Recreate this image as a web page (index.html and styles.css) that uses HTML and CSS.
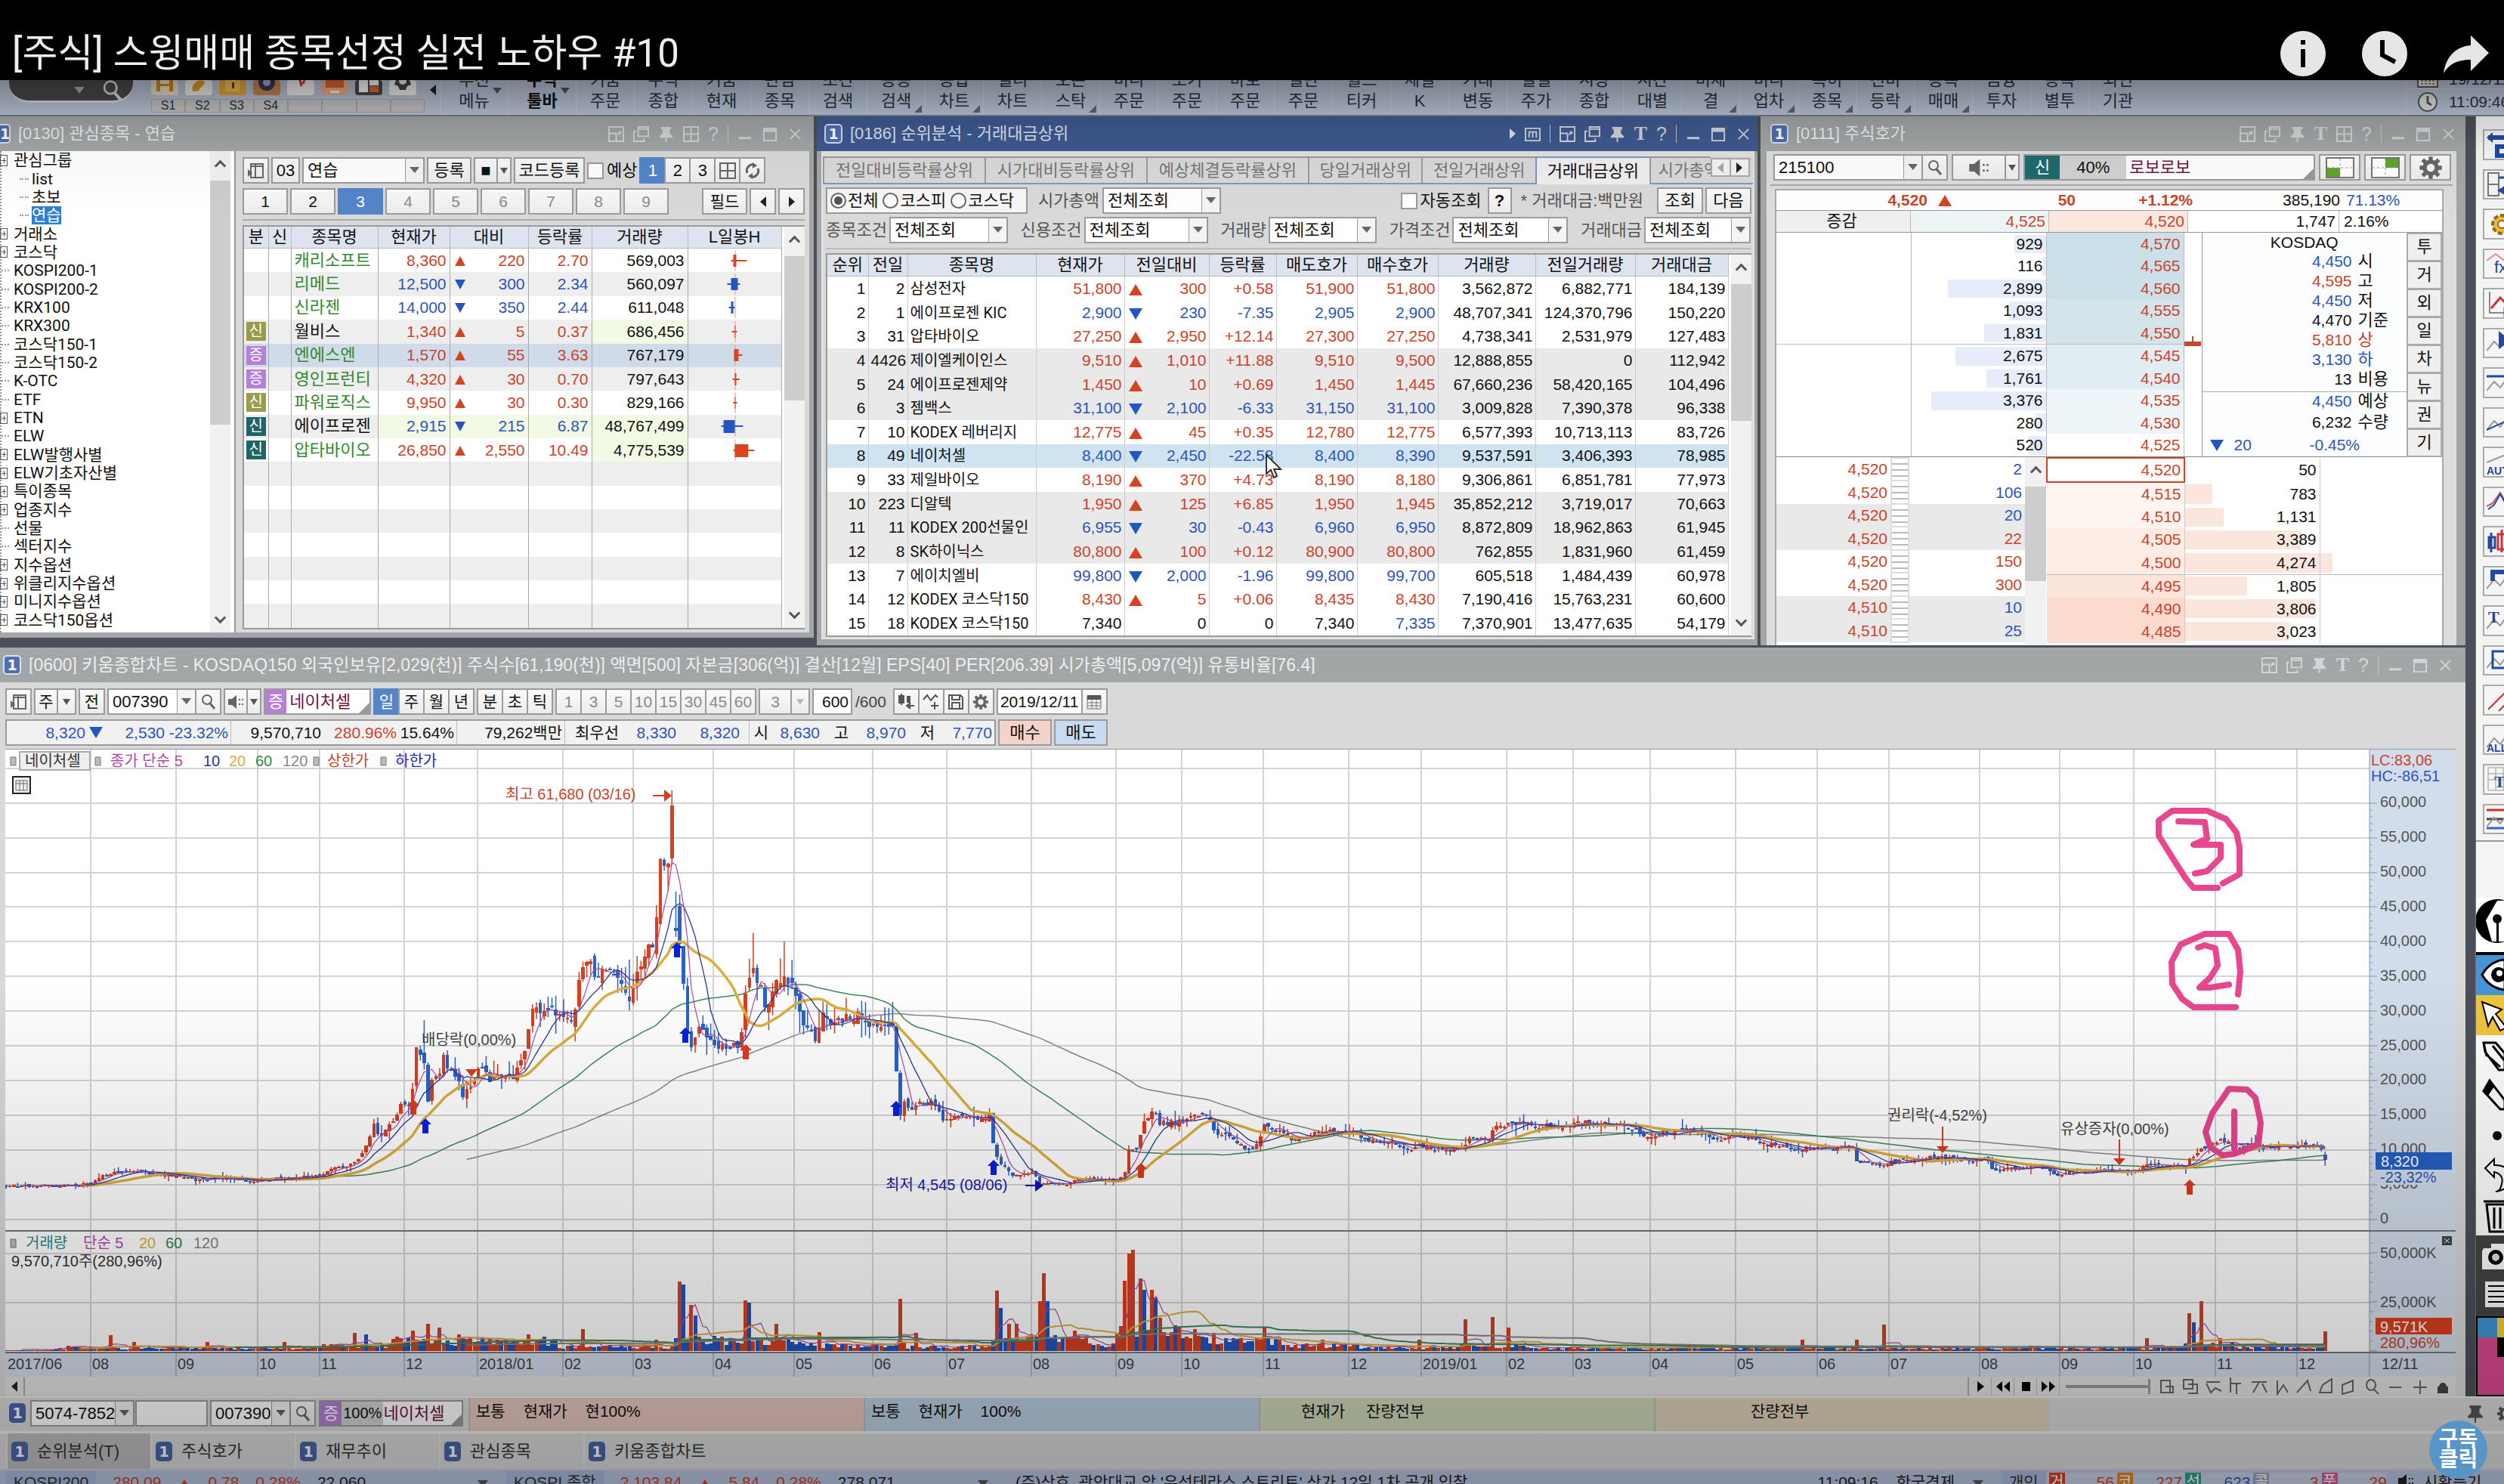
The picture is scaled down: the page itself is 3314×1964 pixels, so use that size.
FILE: index.html
```html
<!DOCTYPE html>
<html lang="ko">
<head>
<meta charset="utf-8">
<title>[주식] 스윙매매 종목선정 실전 노하우 #10</title>
<link rel="stylesheet" href="styles.css">
</head>
<body>
<svg class="defs" aria-hidden="true">
  <symbol id="win" viewBox="0 0 22 22"><path d="M1 1h20v20H1zM1 10h10v11M14 8h3v3M17 8l-4 4" fill="none" stroke="currentColor" stroke-width="2"/></symbol>
  <symbol id="copy" viewBox="0 0 22 22"><path d="M7 1h14v13H7zM7 4h14M4 7H1v14h14v-4" fill="none" stroke="currentColor" stroke-width="2"/></symbol>
  <symbol id="pin" viewBox="0 0 22 22"><path d="M4 1h14v3l-2 1v5l4 4v2H2v-2l4-4V5L4 4zM10 16h2v6h-2z" fill="currentColor"/></symbol>
  <symbol id="grid" viewBox="0 0 22 22"><path d="M1 1h20v20H1zM11 1v20M1 11h20" fill="none" stroke="currentColor" stroke-width="2"/></symbol>
  <symbol id="memo" viewBox="0 0 22 22"><path d="M1 3h20v17H1zM6 16V8h10v8M11 8v8" fill="none" stroke="currentColor" stroke-width="2"/></symbol>
  <symbol id="min" viewBox="0 0 22 22"><path d="M2 15h17v3H2z" fill="currentColor"/></symbol>
  <symbol id="max" viewBox="0 0 22 22"><path d="M2 3h17v17H2z" fill="none" stroke="currentColor" stroke-width="2"/><path d="M2 3h17v5H2z" fill="currentColor"/></symbol>
  <symbol id="close" viewBox="0 0 22 22"><path d="M4 4l14 14M18 4L4 18" stroke="currentColor" stroke-width="2"/></symbol>
  <symbol id="search" viewBox="0 0 22 22"><circle cx="9" cy="8" r="6" fill="none" stroke="currentColor" stroke-width="2"/><path d="M13 13l6 7" stroke="currentColor" stroke-width="3"/></symbol>
  <symbol id="speaker" viewBox="0 0 22 22"><path d="M1 7h5l6-5v18l-6-5H1z" fill="currentColor"/><path d="M15 7h2v2h-2zM19 7h2v2h-2zM15 13h2v2h-2zM19 13h2v2h-2z" fill="currentColor"/></symbol>
  <symbol id="gear" viewBox="0 0 24 24"><circle cx="12" cy="12" r="6" fill="none" stroke="currentColor" stroke-width="4"/><path d="M12 1v4M12 19v4M1 12h4M19 12h4M4 4l3 3M17 17l3 3M20 4l-3 3M7 17l-3 3" stroke="currentColor" stroke-width="4"/></symbol>
  <symbol id="panel" viewBox="0 0 22 22"><path d="M4 2h16v18H4zM4 5h16M10 2v18" fill="none" stroke="currentColor" stroke-width="2"/><path d="M0 9l6 5-6 5z" fill="currentColor"/></symbol>
  <symbol id="refresh" viewBox="0 0 22 22"><path d="M4 14a8 8 0 0 1 9-11M18 8a8 8 0 0 1-9 11" fill="none" stroke="currentColor" stroke-width="3"/><path d="M11 0l6 4-6 4zM11 22l-6-4 6-4z" fill="currentColor"/></symbol>
</svg>

<div class="app">
  <header class="video">
    <h1>[주식] 스윙매매 종목선정 실전 노하우 #10</h1>
    <div class="video-actions">
      <button aria-label="정보"><svg width="60" height="60" viewBox="0 0 60 60"><circle cx="30" cy="30" r="30" fill="#e6e6e6"/><path d="M27 12h6v6h-6zM27 24h6v24h-6z"/></svg></button>
      <button aria-label="나중에 볼 동영상"><svg width="60" height="60" viewBox="0 0 60 60"><circle cx="30" cy="30" r="30" fill="#e6e6e6"/><path d="M27 12v20l17 9" fill="none" stroke="#000" stroke-width="6"/></svg></button>
      <button aria-label="공유"><svg width="60" height="60" viewBox="0 0 60 60"><path d="M36 6l24 23-24 24V38C18 38 7 44 0 56 3 36 14 21 36 19z" fill="#e6e6e6"/></svg></button>
    </div>
  </header>

  <nav class="ribbon">
    <div class="pill"><i class="dn"></i><svg width="34" height="30"><use href="#search"/></svg></div>
    <div class="quick">
      <div class="quick-icons">
        <svg viewBox="0 0 36 20"><rect width="36" height="20" rx="4" fill="#e8e0d0"/><path d="M7 0h22v15H7z" fill="#d08a1c"/><path d="M12 0h12v5H12zM12 8h12v7H12z" fill="#f7e7c0"/></svg>
        <svg viewBox="0 0 36 20"><rect width="36" height="20" rx="4" fill="#f2f0ea"/><path d="M10 15C8 6 14 2 20 0l6 2c0 6-6 6-8 12z" fill="#e59a20"/></svg>
        <svg viewBox="0 0 36 20"><rect width="36" height="20" rx="4" fill="#e6a93c"/><rect x="8" width="20" height="15" rx="2" fill="#f6c552"/><path d="M17 3h3v8h-3z" fill="#5b4310"/></svg>
        <svg viewBox="0 0 36 20"><rect width="36" height="20" rx="4" fill="#c8894e"/><circle cx="18" cy="3" r="11" fill="#3b3560"/><circle cx="18" cy="3" r="5" fill="#a9a6d6"/></svg>
        <svg viewBox="0 0 36 20"><rect width="36" height="20" rx="4" fill="#f4f4f4"/><path d="M17 0l2 8M23 0l-2 5" stroke="#c33" stroke-width="3"/></svg>
        <svg viewBox="0 0 36 20"><rect width="36" height="20" rx="4" fill="#efb48c"/><path d="M6 0h24v10H6z" fill="#e8652a"/><path d="M12 14h12v3H12z" fill="#fff"/></svg>
        <svg viewBox="0 0 36 20"><rect width="36" height="20" rx="4" fill="#4a4a4a"/><path d="M5 0h12v16H5z" fill="#fff"/><path d="M19 0h12v7H19z" fill="#fff"/><path d="M19 8h12v8H19z" fill="#e8652a"/></svg>
        <svg viewBox="0 0 36 20"><rect width="36" height="20" rx="4" fill="#f4f4f4"/><path d="M9 0h18l2 6-5 2-2 5h-8l-2-5-5-2z" fill="#444"/><circle cx="18" cy="1" r="5" fill="#f4f4f4"/></svg>
      </div>
      <div class="quick-slots"><b>S1</b><b>S2</b><b>S3</b><b>S4</b><b></b><b></b><b></b><b></b></div>
    </div>
    <i class="lf fold"></i>
    <div class="menus" id="menus"></div>
    <div class="clock">
      <div><svg width="28" height="16" viewBox="0 0 28 16"><path d="M1 0h26v14H1z" fill="#e8e4d8" stroke="#555" stroke-width="2"/><path d="M5 6h18M5 10h18" stroke="#888" stroke-width="2" stroke-dasharray="3 2"/></svg><span>19/12/11</span></div>
      <div><svg width="28" height="28" viewBox="0 0 28 28"><circle cx="14" cy="14" r="12" fill="#e4e4e0" stroke="#555" stroke-width="2"/><path d="M14 6v9l5 3" fill="none" stroke="#555" stroke-width="3"/></svg><span>11:09:46</span></div>
    </div>
  </nav>

  <div class="desk">
    <main class="work">
      <div class="top">
        <section class="window w1">
          <div class="title"><em>1</em><h2>[0130] 관심종목 - 연습</h2>
            <div class="tools"><button><svg><use href="#win"/></svg></button><button><svg><use href="#copy"/></svg></button><button><svg><use href="#pin"/></svg></button><button><svg><use href="#grid"/></svg></button><button>?</button><i></i><button><svg><use href="#min"/></svg></button><button><svg><use href="#max"/></svg></button><button><svg><use href="#close"/></svg></button></div></div>
          <div class="fav">
            <ul class="tree" id="tree"></ul>
            <div class="bar"><i class="chev up"></i><b></b><i class="chev"></i></div>
            <div class="fav-main">
              <div class="row r1">
                <button class="w34"><svg><use href="#panel"/></svg></button><button class="w38">03</button>
                <select aria-label="관심그룹" class="w162"><option>연습</option></select>
                <button class="w59">등록</button>
                <span class="join"><button class="w30">■</button><button class="w18"><i class="dn sm"></i></button></span>
                <button class="w93">코드등록</button>
                <label><input type="checkbox">예상</label>
                <span class="join"><button class="w33 on">1</button><button class="w33">2</button><button class="w33">3</button><button class="w34"><svg><use href="#grid"/></svg></button><button class="w34"><svg><use href="#refresh"/></svg></button></span>
              </div>
              <div class="row r2"><button>1</button><button>2</button><button class="on">3</button><button class="off">4</button><button class="off">5</button><button class="off">6</button><button class="off">7</button><button class="off">8</button><button class="off">9</button><span class="grow"></span><button>필드</button><button class="w34"><i class="lf"></i></button><button class="w34"><i class="rt"></i></button></div>
              <div class="sheet"><table id="fav"></table><div class="bar"><i class="chev up"></i><b></b><i class="chev"></i></div></div>
            </div>
          </div>
        </section>

        <section class="window w2">
          <div class="title active"><em>1</em><h2>[0186] 순위분석 - 거래대금상위</h2>
            <div class="tools"><button><i class="rt light"></i></button><button><svg><use href="#memo"/></svg></button><i></i><button><svg><use href="#win"/></svg></button><button><svg><use href="#copy"/></svg></button><button><svg><use href="#pin"/></svg></button><button class="serif">T</button><button>?</button><i></i><button><svg><use href="#min"/></svg></button><button><svg><use href="#max"/></svg></button><button><svg><use href="#close"/></svg></button></div></div>
          <div class="rank">
            <div class="tabs"><button>전일대비등락률상위</button><button>시가대비등락률상위</button><button>예상체결등락률상위</button><button class="s">당일거래상위</button><button class="s">전일거래상위</button><button class="s cur">거래대금상위</button><button class="cut">시가총액상위</button><span class="join"><button class="off"><i class="lf pale"></i></button><button><i class="rt"></i></button></span></div>
            <div class="row r3">
              <fieldset><label><input type="radio" name="m" checked>전체</label><label><input type="radio" name="m">코스피</label><label><input type="radio" name="m">코스닥</label></fieldset>
              <label class="gray">시가총액<select class="w157"><option>전체조회</option></select></label>
              <span class="grow"></span>
              <label><input type="checkbox">자동조회</label><button class="w32"><b>?</b></button><span class="gray note">* 거래대금:백만원</span><span class="pair"><button>조회</button><button>다음</button></span>
            </div>
            <div class="row r4">
              <label class="gray">종목조건<select class="w157"><option>전체조회</option></select></label>
              <label class="gray">신용조건<select class="w164"><option>전체조회</option></select></label>
              <label class="gray">거래량<select class="w143"><option>전체조회</option></select></label>
              <label class="gray">가격조건<select class="w153"><option>전체조회</option></select></label>
              <label class="gray">거래대금<select class="w141"><option>전체조회</option></select></label>
            </div>
            <div class="sheet"><table id="rank"></table><div class="bar"><i class="chev up"></i><b></b><i class="chev"></i></div></div>
          </div>
          <svg class="pointer" width="24" height="34" viewBox="0 0 24 34"><path d="M2 2v25l6-5 4 10 4-2-4-9h9z" fill="#fff" stroke="#333" stroke-width="2"/></svg>
        </section>

        <section class="window w3">
          <div class="title"><em>1</em><h2>[0111] 주식호가</h2>
            <div class="tools"><button><svg><use href="#win"/></svg></button><button><svg><use href="#copy"/></svg></button><button><svg><use href="#pin"/></svg></button><button class="serif">T</button><button><svg><use href="#grid"/></svg></button><button>?</button><i></i><button><svg><use href="#min"/></svg></button><button><svg><use href="#max"/></svg></button><button><svg><use href="#close"/></svg></button></div></div>
          <div class="quote">
            <div class="row r5">
              <span class="join"><select aria-label="종목코드" class="w196"><option>215100</option></select><button class="w34"><svg><use href="#search"/></svg></button></span>
              <span class="join"><button class="w70"><svg class="wide"><use href="#speaker"/></svg></button><button class="w18"><i class="dn sm"></i></button></span>
              <div class="name grow"><b class="teal">신</b><span class="pct">40%</span><span>로보로보</span></div>
              <button class="w54"><svg viewBox="0 0 38 28" class="lay"><path d="M1 1h36v26H1z" fill="#fff" stroke="#777" stroke-width="2"/><path d="M2 14h17v12H2z" fill="#5fa52c"/><path d="M19 2v24M2 14h34" stroke="#999" stroke-dasharray="3 3"/></svg></button>
              <button class="w54"><svg viewBox="0 0 38 28" class="lay"><path d="M1 1h36v26H1z" fill="#fff" stroke="#777" stroke-width="2"/><path d="M19 2h17v12H19z" fill="#5fa52c"/><path d="M19 2v24M2 14h34" stroke="#999" stroke-dasharray="3 3"/></svg></button>
              <button class="w54"><svg class="big"><use href="#gear"/></svg></button>
            </div>
            <div class="book">
              <div class="q1 up"><b>4,520</b><i class="tri up"></i><b>50</b><b>+1.12%</b><span>385,190</span><span class="down">71.13%</span></div>
              <div class="q2"><span>증감</span><span class="up">4,525</span><span class="up">4,520</span><span>1,747</span><span>2.16%</span></div>
              <div class="asks">
                <table id="asks"></table>
                <div class="mini"><svg width="22" height="300" viewBox="0 0 22 300"><path d="M0 144h22v6H0zM10 137h2v8h-2z" fill="#c8442a"/></svg></div>
                <div class="info">
                  <div class="k">KOSDAQ</div>
                  <dl><dd class="down">4,450</dd><dt>시</dt><dd class="up">4,595</dd><dt>고</dt><dd class="down">4,450</dd><dt>저</dt><dd>4,470</dd><dt>기준</dt><dd class="up">5,810</dd><dt class="up">상</dt><dd class="down">3,130</dd><dt class="down">하</dt><dd>13</dd><dt>비용</dt></dl>
                  <dl class="exp"><dd class="down">4,450</dd><dt>예상</dt><dd>6,232</dd><dt>수량</dt></dl>
                  <div class="last down"><i class="tri down"></i><span>20</span><span>-0.45%</span></div>
                </div>
                <div class="side"><button>투</button><button>거</button><button>외</button><button>일</button><button>차</button><button>뉴</button><button>권</button><button>기</button></div>
              </div>
              <div class="bids"><table id="trades"></table><div class="bar"><i class="chev up"></i><b></b></div><table id="bids"></table></div>
            </div>
          </div>
        </section>
      </div>

      <section class="window w4">
        <div class="title"><em>1</em><h2>[0600] 키움종합차트 - KOSDAQ150 외국인보유[2,029(천)] 주식수[61,190(천)] 액면[500] 자본금[306(억)] 결산[12월] EPS[40] PER[206.39] 시가총액[5,097(억)] 유통비율[76.4]</h2>
          <div class="tools"><button><svg><use href="#win"/></svg></button><button><svg><use href="#copy"/></svg></button><button><svg><use href="#pin"/></svg></button><button class="serif">T</button><button>?</button><i></i><button><svg><use href="#min"/></svg></button><button><svg><use href="#max"/></svg></button><button><svg><use href="#close"/></svg></button></div></div>
        <div class="row r6">
          <button class="w34"><svg><use href="#panel"/></svg></button>
          <span class="join"><button class="w30">주</button><button class="w24"><i class="dn sm"></i></button></span>
          <button class="w34">전</button>
          <span class="join"><select aria-label="종목" class="w118"><option>007390</option></select><button class="w33"><svg><use href="#search"/></svg></button></span>
          <span class="join"><button class="w30"><svg><use href="#speaker"/></svg></button><button class="w18"><i class="dn sm"></i></button></span>
          <div class="name w142"><b class="vio">증</b><span>네이처셀</span></div>
          <span class="join seg"><button class="on">일</button><button>주</button><button>월</button><button>년</button></span>
          <span class="join seg"><button>분</button><button>초</button><button>틱</button></span>
          <span class="join seg off"><button>1</button><button>3</button><button>5</button><button>10</button><button>15</button><button>30</button><button>45</button><button>60</button></span>
          <span class="join off"><button class="w42">3</button><button class="w24"><i class="dn sm pale"></i></button></span>
          <label class="count"><input type="text" value="600" aria-label="봉 개수">/600</label>
          <span class="join seg"><button><svg viewBox="0 0 22 22"><path d="M2 3h6v9H2zM5 0v15M12 4h4v7h-4M22 16h-8M17 12l-5 4 5 4" fill="#555" stroke="#555" stroke-width="2"/></svg></button><button><svg viewBox="0 0 22 22"><path d="M1 8l5-6 5 7 6-7 3 3M16 11v10M11 16h10" fill="none" stroke="#555" stroke-width="2"/></svg></button><button><svg viewBox="0 0 22 22"><path d="M2 2h15l3 3v15H2zM6 2v6h10V2M6 20v-8h10v8" fill="none" stroke="#555" stroke-width="2"/></svg></button><button><svg><use href="#gear"/></svg></button></span>
          <span class="join"><input type="text" class="w112" value="2019/12/11" aria-label="기준일"><button class="w33"><svg viewBox="0 0 22 22"><path d="M2 3h18v17H2zM2 12h18M2 16h18M8 8v12M14 8v12" fill="none" stroke="#777"/><path d="M2 2h18v6H2z" fill="#555"/></svg></button></span>
        </div>
        <div class="row r7">
          <div class="strip"><span class="down c104">8,320</span><i class="tri down"></i><span class="down c80">2,530</span><span class="down c86">-23.32%</span><s></s><span class="c120">9,570,710</span><span class="up c100">280.96%</span><span class="c72">15.64%</span><s></s><span class="c138">79,262백만</span><s></s><span class="c66">최우선</span><span class="down c76">8,330</span><span class="down c86">8,320</span><s class="gap"></s><span class="c24">시</span><span class="down c66">8,630</span><span class="c36">고</span><span class="down c72">8,970</span><span class="c36">저</span><span class="down c72">7,770</span></div>
          <button class="buy">매수</button><button class="sell">매도</button>
        </div>
        <svg id="chart" viewBox="7 992 3243 830" role="img" aria-label="네이처셀 일봉 차트"></svg>
        <div class="scroll"><button><i class="lf"></i></button><span class="grow"></span><div class="play"><button aria-label="재생"><svg viewBox="0 0 22 18"><path d="M7 2l9 7-9 7z"/></svg></button><button aria-label="뒤로"><svg viewBox="0 0 22 18"><path d="M10 2v14L2 9zM20 2v14l-8-7z"/></svg></button><button aria-label="정지"><svg viewBox="0 0 22 18"><path d="M6 3h11v12H6z"/></svg></button><button aria-label="앞으로"><svg viewBox="0 0 22 18"><path d="M2 2v14l8-7zM12 2v14l8-7z"/></svg></button></div><input type="range" value="100" aria-label="확대">
          <svg width="396" height="24" viewBox="0 0 396 24"><path d="M6 4h12v16H6zM12 12h10v8H12M36 3h12v12H36zM42 9h12v12H42M66 6h18M66 8l6 12 6-6 8 4M98 0v20M98 8h14M106 8v14M126 6h20M136 6l-8 14M140 8l6 12M160 4v18l8-12 6 10M186 20l14-16 4 14M216 20l4-10 12-8v18zM246 22V10l14-6v14zM278 10a6 7 0 1 0 12 0a6 7 0 1 0-12 0M288 16l6 6M308 13h16M340 13h18M349 4v18" fill="none" stroke="#666" stroke-width="2"/><path d="M372 21h14V12h-2a5 5 0 0 0-10 0h-2z" fill="#444"/></svg></div>
      </section>
    </main>

    <aside class="dock">
      <div class="dock-tools" id="dock"></div>
      <svg class="dock-pen" viewBox="0 0 38 660">
        <path d="M0 0h38v660H0z" fill="#fff"/>
        <circle cx="28" cy="31" r="29"/><path d="M28 4l-15 26 8 28h18V4z" fill="#fff"/><circle cx="28" cy="28" r="6"/><path d="M27 28h3v30h-3z"/>
        <path d="M0 72h38v4H0z"/><path d="M0 76h38v53H0z" fill="#4595d8"/><path d="M8 102q10-18 30-20v40Q18 120 8 102z" fill="#fff" stroke="#000" stroke-width="3"/><circle cx="30" cy="102" r="10"/><circle cx="31" cy="100" r="4" fill="#fff"/>
        <path d="M0 129h38v53H0z" fill="#f0c53c"/><path d="M8 138l26 10-8 6 14 18-8 4-10-18-6 12z" fill="#fff" stroke="#000" stroke-width="2"/>
        <path d="M10 192l16 0 12 14v22l-8 0-18-24zM10 192l4 18M22 196l16 20M14 208l18 16" fill="#fff" stroke="#000" stroke-width="3"/>
        <path d="M18 242l20 26v12h-6L10 256z" fill="#fff" stroke="#000" stroke-width="3"/><path d="M18 242l-8 14 6 6 8-12z"/>
        <circle cx="28" cy="315" r="6"/>
        <path d="M24 346l-12 12 12 12v-7q16 4 8 22-2 4-6 4q22-4 20-20-4-16-22-15z" fill="#fff" stroke="#000" stroke-width="2"/>
        <path d="M14 406h30l-2 36H18zM10 402h30M24 410v28M32 410v28" fill="#fff" stroke="#000" stroke-width="3"/>
        <path d="M0 447h38v107H0z" fill="#454545"/><path d="M10 464h10v-6h18v34H8v-24z" fill="#fff"/><circle cx="26" cy="476" r="10"/><circle cx="26" cy="476" r="5" fill="#ddd"/>
        <path d="M12 508h26v34H12z" fill="#fff"/><path d="M16 514h22M16 521h22M16 528h22M16 535h22" stroke="#000" stroke-width="2"/>
        <path d="M0 554h38v106H0z"/><path d="M2 556h26v26H2z" fill="#3f97d6"/><path d="M28 556h10v26H28z" fill="#f2cf3a"/><path d="M2 582h26v26h10v50H2z" fill="#dc4a90"/>
      </svg>
    </aside>
  </div>

  <div class="order">
    <em>1</em><select aria-label="계좌" class="w138"><option>5074-7852</option></select><input type="password" aria-label="비밀번호" class="w96">
    <span class="join"><select aria-label="주문 종목" class="w107"><option>007390</option></select><button class="w33"><svg><use href="#search"/></svg></button></span>
    <div class="name w191"><b class="vio">증</b><span class="pct">100%</span><span>네이처셀</span></div>
    <div class="slot pink"><span>보통</span><span>현재가</span><span>현100%</span></div>
    <div class="slot blue"><span>보통</span><span>현재가</span><span>100%</span></div>
    <div class="slot green"><span>현재가</span><span>잔량전부</span></div>
    <div class="slot tan"><span>잔량전부</span></div>
    <span class="grow"></span>
    <svg class="ic"><use href="#pin"/></svg><svg class="ic"><use href="#gear"/></svg>
  </div>
  <div class="tasks"><button class="cur"><em>1</em>순위분석(T)</button><button><em>1</em>주식호가</button><button><em>1</em>재무추이</button><button><em>1</em>관심종목</button><button><em>1</em>키움종합차트</button></div>
  <footer class="ticker">
    <div class="ix"><b>KOSPI200</b><span class="up">280.09</span><i class="tri up"></i><span class="up">0.78</span><span class="up">0.28%</span><span>22,060</span><i class="dn"></i></div>
    <div class="ix"><b>KOSPI 종합</b><span class="up">2,103.84</span><i class="tri up"></i><span class="up">5.84</span><span class="up">0.28%</span><span>278,071</span><i class="dn"></i></div>
    <div class="news"><span>(주)상호, 광안대교 앞 '유성테라스 스트리트' 상가 12일 1차 공개 입찰</span><span class="grow"></span><span>11:09:16</span><span>한국경제</span><i class="dn"></i></div>
    <div class="inv"><b>개인</b><mark class="m1">거</mark><span class="up">56</span><mark class="m2">코</mark><span class="up">227</span><mark class="m3">선</mark><span class="down">623</span><mark class="m4">콜</mark><span class="up">3</span><mark class="m5">풋</mark><span class="up">29</span></div>
    <div class="voice"><svg><use href="#speaker"/></svg>시황듣기</div>
  </footer>
  <a class="subscribe" href="#subscribe">구독<br>클릭</a>
</div>
<script src="app.js"></script>
</body>
</html>
```
FILE: styles.css
```css
* { box-sizing: border-box; }
body { margin: 0; background: #000; font: 21px/24px "Liberation Sans", "Noto Sans CJK KR", sans-serif; color: #111; }
button, select, input { font: inherit; color: inherit; margin: 0; }
button { padding: 0; border: 0; background: none; white-space: nowrap; display: inline-flex; align-items: center; justify-content: center; }
h1, h2, dl, dd, dt, ul, fieldset { margin: 0; padding: 0; border: 0; font-weight: 400; }
svg { display: block; flex: none; }
.defs { position: absolute; width: 0; height: 0; }
.grow { flex: 1; }
.up { color: #cc432b; }
.down { color: #2c56b8; }

.app { position: relative; display: grid; grid-template-rows: 106px 48px minmax(0, 1fr) 46px 50px 20px; height: 100vh; overflow: hidden; background: #4c4f59; }
/* player shade at the top and bottom edge */
.app::after { content: ""; position: absolute; inset: 106px 0 0; pointer-events: none; background: linear-gradient(rgba(0,0,0,.36), rgba(0,0,0,.14) 48px, rgba(0,0,0,.03) 94px, transparent 180px, transparent 64%, rgba(0,0,0,.27)); }

.video { display: flex; justify-content: space-between; align-items: center; background: #000; padding: 36px 20px 0 16px; }
.video h1 { color: #eee; font: 51px/64px Roboto, "Noto Sans CJK KR", sans-serif; white-space: nowrap; }
.video-actions { display: flex; gap: 48px; }

.ribbon { display: flex; background: linear-gradient(#bbc4d7, #bcc7da); border-bottom: 2px solid #777f8c; overflow: hidden; color: #2b3140; }
.pill { width: 164px; margin: 0 24px 16px 12px; background: #4a4a4c; border-radius: 0 0 26px 26px; border-bottom: 3px solid #dde; color: #ddd; display: flex; align-items: center; justify-content: flex-end; gap: 20px; padding-right: 10px; flex: none; }
.pill .dn { border-top-color: #aaa; }
.quick { width: 362px; flex: none; }
.quick-icons { display: flex; gap: 9px; height: 25px; }
.quick-icons svg { width: 36px; height: 20px; }
.quick-slots { display: grid; grid-template-columns: repeat(8, 1fr); height: 18px; }
.quick-slots b { background: #c6c6c6; border: 1px solid #aaa; font-size: 16px; line-height: 16px; font-weight: 400; text-align: center; }
.ribbon .fold { margin: 6px 0 0 7px; flex: none; }
.menus { display: flex; margin-left: 5px; flex: 1; min-width: 0; }
.menus button { position: relative; width: 77px; flex: none; font-size: 22px; line-height: 28px; border-left: 1px solid #cdd5e2; display: flex; flex-direction: column; justify-content: flex-end; padding-bottom: 4px; }
.menus button:nth-child(-n+2) { width: 90px; }
.menus button:nth-child(2) { font-weight: 700; color: #111; }
.menus .m::after { content: ""; position: absolute; right: 4px; bottom: 3px; border: 5px solid transparent; border-right-color: #667; border-bottom-color: #667; }
.menus button:nth-child(-n+2)::after { content: ""; position: absolute; right: 8px; top: 10px; border: 6px solid transparent; border-top: 8px solid #556; border-bottom: 0; }
.clock { width: 130px; border-left: 1px solid #cdd5e2; display: flex; flex-direction: column; flex: none; }
.clock div { display: flex; gap: 14px; align-items: center; padding-left: 14px; height: 35px; white-space: nowrap; }
.clock div:first-child { height: 12px; align-items: flex-end; border-bottom: 1px solid #cdd5e2; overflow: hidden; }

.desk { display: grid; grid-template-columns: minmax(0, 1fr) 38px; min-height: 0; }
.work { display: grid; grid-template-rows: 703fr 991fr; min-height: 0; padding-right: 13px; background: #4c4f59; }
.top { display: grid; grid-template-columns: 1077fr 1245fr 933fr; gap: 4px; min-height: 0; padding-bottom: 3px; }
.window { position: relative; display: flex; flex-direction: column; min-width: 0; min-height: 0; background: #a3a6a7; }
.w1 { margin-bottom: 10px; padding: 0 6px 7px 0; }
.w2 { padding: 0 4px 8px 6px; }
.w3 { padding: 0 12px 0 8px; }
.title { display: flex; align-items: center; height: 46px; flex: none; color: #eceeee; font-size: 22px; gap: 10px; }
.w1 .title { padding-right: 8px; }
.w3 .title { padding-left: 5px; }
.w4 .title { height: 46px; padding: 0 16px 0 4px; }
.title.active { background: #3f5a91; margin: 0 -4px 0 -6px; padding: 0 8px 0 10px; color: #dde5f2; }
.title h2 { font-size: 22px; white-space: nowrap; flex: 1; overflow: hidden; }
.w4 .title h2 { font-size: 23px; }
em { width: 24px; height: 26px; flex: none; border: 2px solid #dbe2ef; border-radius: 5px; background: #4f6fb0; color: #fff; font: 700 19px/22px "DejaVu Sans", sans-serif; text-align: center; }
.w1 .title em { width: 14px; border-left: 0; border-radius: 0 5px 5px 0; }
.tools { display: flex; align-items: center; gap: 12px; color: #d3d6d8; font-size: 25px; }
.tools svg { width: 21px; height: 21px; }
.tools > i { width: 1px; height: 24px; background: #c6cacc; }
.tools .serif { font: 700 26px/24px "Liberation Serif", serif; }

i.dn, i.lf, i.rt { display: inline-block; width: 0; height: 0; border: 7px solid transparent; }
i.dn { border-top: 9px solid #555; border-bottom: 0; }
i.sm { border-width: 8px 5px 0; }
i.lf { border-right: 8px solid #222; border-left: 0; }
i.rt { border-left: 8px solid #222; border-right: 0; }
i.light { border-left-color: #dde5f2; }
i.lf.pale { border-right-color: #aaa; }
i.dn.pale { border-top-color: #bbb; }
.tri { display: inline-block; width: 0; height: 0; border: 9px solid transparent; flex: none; }
.tri.up { border-top: 0; border-bottom: 15px solid #d5431f; }
.tri.down { border-bottom: 0; border-top: 15px solid #2356c0; }
td .tri { float: left; margin: 8px 0 0 2px; }
#fav td .tri { border-width: 7px; margin-top: 8px; }
#fav td .tri.up { border-top: 0; border-bottom-width: 13px; }
#fav td .tri.down { border-bottom: 0; border-top-width: 13px; }

.row { display: flex; align-items: center; gap: 3px; flex: none; white-space: nowrap; }
.row button, .order button { height: 35px; border: 2px solid #9b9b9b; background: linear-gradient(#fafafa, #ececec); min-width: 0; }
.row svg, .order svg { width: 22px; height: 22px; color: #666; }
.row svg.big { width: 32px; height: 32px; }
.row svg.lay { width: 38px; height: 28px; }
.row svg.wide { width: 40px; height: 28px; }
.row button.on { background: #5485c9; color: #fff; border-color: #5485c9; }
.row .off, .row.r2 .off, .off button { color: #8a8a8a; }
.join { display: inline-flex; }
.join > * + * { margin-left: -2px; }
select { appearance: none; height: 35px; border: 2px solid #9b9b9b; border-radius: 0; background: url("data:image/svg+xml,%3Csvg xmlns='http://www.w3.org/2000/svg' width='24' height='31'%3E%3Cpath d='M0 0h24v31H0z' fill='%23f4f4f4'/%3E%3Cpath d='M0 0h1v31H0z' fill='%239b9b9b'/%3E%3Cpath d='M6 11h13l-6 8z' fill='%23666'/%3E%3C/svg%3E") right center no-repeat #fff; padding: 0 24px 0 5px; color: #111; font-size: 22px; }
input[type=text], input[type=password] { height: 35px; border: 2px solid #9b9b9b; background: #fff; padding: 0 3px; }
input[type=checkbox] { appearance: none; width: 22px; height: 22px; border: 2px solid #999; background: #fff; }
input[type=radio] { appearance: none; width: 21px; height: 21px; border: 2px solid #666; border-radius: 50%; background: #fff; }
input[type=radio]:checked { background: radial-gradient(circle, #555 5px, #fff 6px); }
label { display: inline-flex; align-items: center; gap: 4px; font-size: 22px; }
.gray { color: #555; }
.w18 { width: 20px; } .w24 { width: 26px; } .w30 { width: 32px; } .w32 { width: 32px; } .w33 { width: 35px; } .w34 { width: 35px; } .w38 { width: 38px; } .w42 { width: 44px; } .w54 { width: 55px; } .w59 { width: 59px; } .w70 { width: 72px; } .w93 { width: 94px; } .w96 { width: 96px; } .w107 { width: 107px; } .w112 { width: 114px; } .w118 { width: 118px; } .w138 { width: 138px; } .w141 { width: 141px; } .w142 { width: 142px; } .w143 { width: 143px; } .w153 { width: 153px; } .w157 { width: 157px; } .w162 { width: 162px; } .w164 { width: 164px; } .w191 { width: 191px; } .w196 { width: 198px; }
.name { position: relative; display: flex; align-items: center; height: 35px; border: 2px solid #9b9b9b; background: #fff; color: #6d1440; font-size: 22px; overflow: hidden; gap: 4px; }
.name::after { content: ""; position: absolute; right: 0; bottom: 0; border: 7px solid transparent; border-right-color: #999; border-bottom-color: #999; }
.name b { font-weight: 400; color: #fff; align-self: stretch; line-height: 31px; padding: 0 4px; }
.vio { background: #b77fd6; }
.teal { background: #1f6a6e; }
.name b.teal { padding: 0 13px; }
.pct { color: #111; background: #d2d2d2; align-self: stretch; line-height: 31px; padding: 0 3px; }
.r5 .pct { padding: 0 22px; margin-left: -4px; }
.order .name { gap: 0; }
.order .pct { padding: 0 2px; font-size: 20px; }

.bar { width: 27px; flex: none; background: #f1f1f1; display: flex; flex-direction: column; align-items: center; padding: 14px 0; }
.bar b { align-self: stretch; background: #cdcdcd; height: 38%; }
.bar .chev:last-child:not(.up) { margin-top: auto; }
.chev { width: 11px; height: 11px; border: solid #555; border-width: 0 3px 3px 0; transform: rotate(45deg); }
.chev.up { transform: rotate(225deg); margin-bottom: 14px; flex: none; }

.fav { flex: 1; min-height: 0; display: flex; background: #fff; }
.fav > .bar { height: 100%; margin-right: 5px; }
.fav > .bar b { height: 53%; }
.tree { list-style: none; width: 278px; flex: none; display: grid; grid-template-rows: repeat(26, 1fr) 4px; overflow: hidden; border-left: 2px dotted #999; font: 21px/24px Roboto, "Noto Sans CJK KR", sans-serif; }
.tree li { display: flex; align-items: center; padding-left: 16px; line-height: 24px; white-space: nowrap; }
.tree li::before { content: ""; position: absolute; left: 2px; width: 10px; border-top: 2px dotted #999; }
.tree .plus::before { content: ""; left: 0; width: 8px; height: 13px; border: 1px solid #555; background: linear-gradient(#555, #555) center/6px 1px no-repeat, linear-gradient(#555, #555) center/1px 7px no-repeat; }
.tree .sub { padding-left: 40px; }
.tree .sub::before { left: 26px; width: 12px; }
.tree .sel span { background: #2d7fd3; color: #fff; }
.fav-main { flex: 1; min-width: 0; background: #d9d9d9; border-left: 2px solid #999; padding: 8px 6px 4px 9px; display: flex; flex-direction: column; }
.r1 { font-size: 22px; }
.r2 { margin-top: 6px; padding-bottom: 6px; border-bottom: 2px solid #aaa; gap: 3px; }
.r2 button { width: 60px; }
.r2 button.w34 { width: 35px; }
.sheet { flex: 1; min-height: 0; display: flex; background: #fff; border: 2px solid #9b9b9b; margin-top: 6px; }
table { border-collapse: collapse; table-layout: fixed; height: 100%; }
.sheet table { flex: 1; width: 0; }
.sheet .bar { height: 100%; margin: 0 3px; }
td, th { height: 28px; padding: 0 4px; text-align: right; font-weight: 400; white-space: nowrap; overflow: hidden; line-height: 28px; border-right: 1px solid #bbb; }
th { text-align: center; background: #dee4ef; font-size: 22px; border-bottom: 1px solid #bbb; padding: 0; }
.t { text-align: left; font-size: 22px; }
#fav tr:nth-child(even) td { background: #eeeeee; }
#fav tr:nth-child(5) td { background: #cfdbe9; }
#fav td { border-color: #aaa; }
#fav tr td.hot { background: #f2f9e4; }
.grn { color: #2f8a2f; }
#fav td:first-child { padding: 0 3px; }
mark { display: block; color: #fff; text-align: center; line-height: 25px; font-size: 20px; }
.g1 { background: #9a9c4a; } .g2 { background: #b77fd6; } .g3 { background: #1f6468; }
#fav td:last-child { padding: 0; }
#fav td svg { width: 100%; height: 28px; }

.rank { flex: 1; min-height: 0; background: #d9d9d9; border: 2px solid #e6e6e6; border-top: 7px solid #e2e2e2; padding: 0 2px 1px 4px; display: flex; flex-direction: column; }
.tabs { display: flex; height: 37px; margin: 0 -2px 0 -4px; border-bottom: 2px solid #7b97c9; flex: none; font-size: 22px; color: #777; }
.tabs button { flex: 214; min-width: 0; overflow: hidden; border: 2px solid #9b9b9b; border-right: 0; border-bottom: 0; font-size: 22px; }
.tabs .s { flex: 150; }
.tabs .cur { color: #111; background: #efefef; border-color: #7b97c9; margin-bottom: -2px; }
.tabs .cut { flex: 70; justify-content: flex-start; padding-left: 10px; }
.tabs .join { padding: 2px 4px 8px 0; }
.tabs .join button { flex: none; width: 27px; border: 2px solid #aaa; background: #f2f2f2; }
.r3 { height: 43px; gap: 8px; font-size: 22px; }
.r3 fieldset { display: flex; gap: 6px; height: 35px; border: 2px solid #999; background: #f6f6f6; padding: 0 4px; margin-right: 6px; width: 267px; }
.r3 fieldset label { gap: 2px; }
.note { margin: 0 10px 0 4px; }
.pair { display: flex; gap: 3px; }
.pair button { width: 61px; }
.r4 { justify-content: space-between; padding-bottom: 6px; border-bottom: 2px solid #bbb; margin-right: 1px; }
.r4 label { gap: 3px; }
.w2 .sheet { margin-top: 5px; }
#rank .alt td { background: #e9e9e9; }
#rank .cur td { background: #cfe4f0; }
#rank td { border-color: #ccc; padding: 0 3px; }
#rank .t { font: 20px/28px Roboto, "Noto Sans CJK KR", sans-serif; }
.pointer { position: absolute; left: 593px; top: 446px; }

.quote { flex: 1; min-height: 0; background: #dcdcdc; padding: 4px 5px 0; display: flex; flex-direction: column; }
.r5 { padding: 0 2px 5px 4px; gap: 5px; border-bottom: 2px solid #aaa; }
.book { flex: 1; min-height: 0; display: flex; flex-direction: column; margin: 4px 12px 0 6px; border: 2px solid #aaa; border-bottom: 0; background: #fff; overflow: hidden; }
.q1, .q2 { display: grid; height: 27px; align-items: center; border-bottom: 1px solid #999; flex: none; text-align: right; line-height: 26px; }
.q1 { grid-template-columns: 200px 46px 150px 155px 195px 1fr; }
.q1 .tri { justify-self: center; }
.q1 span { color: #111; } .q1 .down { color: #2c56b8; text-align: left; padding-left: 8px; }
.q2 { grid-template-columns: 178px 183px 184px 200px 1fr; height: 29px; line-height: 28px; }
.q2 span { border-right: 1px solid #bbb; padding-right: 4px; }
.q2 span:nth-child(1) { background: #efefef; text-align: center; font-size: 22px; }
.q2 span:nth-child(2) { background: #ecf4f5; }
.q2 span:nth-child(3) { background: #fae7df; }
.q2 span:nth-child(5) { text-align: left; padding-left: 6px; border: 0; }
.asks { flex: 297; min-height: 0; display: flex; border-bottom: 1px solid #888; }
#asks { width: 539px; }
#asks td { border-color: #bbb; background: linear-gradient(#e7ecfa, #e7ecfa) right center no-repeat #fff; }
#asks td:nth-child(1) { background: none; }
#asks tr:nth-child(5) td { border-bottom: 1px solid #bbb; }
#asks .p { background: #fff; }
#asks tr:nth-child(-n+9) .p { background: #eef5f8; }
#asks tr:nth-child(-n+7) .p { background: #e0edf2; }
#asks tr:nth-child(-n+5) .p { background: #d3e5eb; }
#asks tr:nth-child(-n+3) .p { background: #cbe0e8; }
.mini { width: 24px; border-right: 1px solid #999; flex: none; }
.mini svg { width: 22px; }
.info { flex: 1; display: flex; flex-direction: column; background: #fbfdff; }
.k { line-height: 26px; text-align: center; }
.info dl { display: grid; grid-template-columns: 198px 1fr; grid-auto-rows: 26px; gap: 0 8px; }
.info dt { font-size: 22px; } .info dd { text-align: right; }
.info .exp { border-top: 1px solid #aaa; grid-auto-rows: 28px; margin-top: 2px; }
.last { display: flex; align-items: center; gap: 14px; padding: 2px 62px 0 10px; }
.last span:last-child { margin-left: auto; }
.side { width: 47px; display: grid; }
.side button { border: 2px solid #aaa; background: #efefef; margin-bottom: -1px; font-size: 22px; }
.bids { flex: 250; min-height: 0; display: flex; }
.bids .bar { padding-top: 14px; width: 28px; }
.bids .bar b { height: 125px; flex: none; }
.bids table { height: 246px; }
#trades { width: 329px; flex: none; }
#trades td { border: 0; }
#trades tr:nth-child(4n+3) td:not(.rung), #trades tr:nth-child(4n+4) td:not(.rung) { background: #e9e9e9; }
#trades .rung { background: repeating-linear-gradient(#fff 0 6px, #bbb 6px 8px); border: 2px solid #ddd; }
#bids { flex: 1; width: 0; }
#bids td { border-color: #ccc; background: linear-gradient(#fbe6dd, #fbe6dd) left center no-repeat; }
#bids .p { background: #fce5da; }
#bids tr:nth-child(-n+5) .p { background: #fcece4; }
#bids tr:nth-child(-n+3) .p { background: #fef5f0; }
#bids tr:nth-child(1) .p { background: #fff; border: 2px solid #c8442a; }
#bids tr:nth-child(5) td { border-bottom: 1px solid #bbb; }
#bids tr:nth-child(n+7) .p { background: #fadbce; }

.w4 { padding: 0 13px 0 7px; background: #d9d9d9; }
.w4 .title { margin: 0 -13px 0 -7px; background: #a3a6a7; }
.r6 { padding: 8px 0 6px; }
.seg button { width: 35px; }
.count { font-size: 21px; gap: 4px; margin-right: 6px; color: #444; }
.count input { width: 53px; text-align: right; color: #111; }
.r7 { padding-bottom: 4px; }
.r7 button { width: 71px; font-size: 22px; }
.r7 .buy { background: #f4d3c8; } .r7 .sell { background: #c7dcf2; }
.strip { width: 1311px; height: 35px; display: flex; align-items: center; border: 2px solid #9b9b9b; background: #f1f1f1; }
.strip span { text-align: right; }
.strip .tri { margin-left: 5px; }
.strip s { width: 1px; height: 31px; background: #bbb; margin: 0 3px; }
.strip s.gap { margin-left: 12px; }
.c24 { width: 22px; } .c36 { width: 38px; } .c66 { width: 68px; } .c72 { width: 76px; } .c76 { width: 76px; } .c80 { width: 82px; } .c86 { width: 84px; } .c100 { width: 100px; } .c104 { width: 104px; } .c120 { width: 116px; } .c138 { width: 136px; }
#chart { width: 100%; flex: none; font-size: 20px; background: #fff; border-top: 1px solid #999; }
.scroll { height: 25px; display: flex; align-items: center; background: #e4e4e4; flex: none; }
.scroll > button { width: 26px; height: 24px; border-right: 2px solid #aaa; }
.play { display: flex; border-left: 2px solid #aaa; }
.play button { width: 30px; height: 24px; border-right: 1px solid #bbb; }
.play svg { width: 22px; height: 18px; }
.scroll input { width: 112px; height: 20px; appearance: none; background: linear-gradient(#999, #999) center/100% 4px no-repeat; margin: 0 8px; }
.scroll input::-webkit-slider-thumb { appearance: none; width: 3px; height: 20px; background: #999; }

.dock { background: #f4f4f2; display: flex; flex-direction: column; justify-content: space-between; overflow: hidden; border-left: 1px solid #777; }
.dock-tools { display: grid; gap: 12px; padding: 17px 0 8px 9px; border-bottom: 2px solid #999; }
.dock-tools button { width: 52px; height: 41px; border: 2px solid #aaa; background: #f5f5f5; justify-content: flex-start; padding-left: 3px; overflow: hidden; }
.dock-tools button:nth-child(2n) { height: 40px; }
.dock-tools svg { width: 44px; height: 36px; }
.dock-pen { width: 38px; height: 660px; }

.order { display: flex; align-items: flex-start; padding: 3px 0 0 12px; background: #d9d9d9; border-top: 2px solid #eee; overflow: hidden; white-space: nowrap; }
.order > * { flex-shrink: 0; }
.order em { margin: 4px 6px 0 0; width: 22px; background: #4a66a6; border-color: #4a66a6; }
.order .w96 { margin: 0 3px 0 1px; }
.order .w191 { margin: 0 7px 0 4px; }
.slot { width: 523px; height: 44px; margin-top: -3px; border-left: 2px solid #bbb; display: flex; gap: 24px; padding: 6px 8px; }
.pink { background: #e6c7be; } .blue { background: #bacfe2; } .green { background: #cfd8b8; padding-left: 54px; gap: 28px; } .tan { background: #dfd2ba; padding-left: 126px; }
.order .ic { width: 24px; height: 28px; margin: 4px 8px; color: #555; }
.order .ic:last-child { margin: 4px -14px 0 8px; }
.tasks { display: flex; background: #d8d8d8; border-top: 3px solid #eee; padding-left: 8px; }
.tasks button { width: 191px; justify-content: flex-start; gap: 12px; padding-left: 5px; border-left: 2px solid #e4e4e4; font-size: 22px; color: #333; }
.tasks button.cur { background: #bcbcbc; }
.tasks em { background: #4a66a6; border-color: #4a66a6; width: 22px; }
.ticker { display: flex; background: #b7c4df; line-height: 26px; overflow: hidden; padding-top: 3px; white-space: nowrap; padding-left: 8px; color: #222; border-top: 2px solid #ccd; }
.ticker > div { display: flex; align-items: flex-start; flex: none; }
.ticker b { font-weight: 400; color: #333; background: #a9b9dc; padding: 3px 10px 0; margin-top: -3px; }
.ticker i { margin-top: 9px; }
.ix { width: 662px; gap: 22px; }
.ix .dn, .news .dn { margin: 10px 24px 0 auto; }
.news { width: 1317px; gap: 24px; padding-left: 12px; }
.inv { gap: 4px; width: 510px; background: #c5cfe4; }
.inv span { width: 64px; text-align: right; }
.inv mark { width: 21px; flex: none; }
.m1 { background: #d0402a; } .m2 { background: #d8862c; } .m3 { background: #2f9d86; } .m4 { background: #9aa0ba; } .m5 { background: #d45a9a; }
.voice { gap: 12px; padding-left: 14px; }
.voice svg { width: 22px; height: 22px; }
.subscribe { position: absolute; right: 22px; bottom: 7px; z-index: 2; width: 77px; height: 77px; border-radius: 50%; background: #5795c8; color: #fff; font-size: 28px; line-height: 27px; font-weight: 700; text-align: center; text-decoration: none; padding-top: 11px; }
```
FILE: app.js
```js
const $ = id => document.getElementById(id);

/* ribbon menu: upper word, lower word, m = has a submenu mark */
$('menus').innerHTML = '추천 메뉴|주식 툴바|키움 주문|주식 종합|키움 현재|관심 종목|조건 검색|종종 검색 m|종합 차트 m|멀티 차트|오픈 스탁 m|미니 주문|쏘기 주문|바로 주문|일반 주문|월드 티커|체결 K|거래 변동|일별 주가|시장 종합|시간 대별|미체 결 m|미니 업차 m|특허 종목 m|전비 등락 m|종목 매매 m|금융 투자|종목 별투|외인 기관'
  .split('|').map(s => { const [a, b, m] = s.split(' '); return `<button class="${m || ''}"><span>${a}</span><span>${b}</span></button>`; }).join('');

$('tree').innerHTML = '+관심그룹|-list|-초보|*연습|+거래소|+코스닥|KOSPI200-1|KOSPI200-2|KRX100|KRX300|코스닥150-1|코스닥150-2|K-OTC|ETF|+ETN|ELW|+ELW발행사별|+ELW기초자산별|+특이종목|+업종지수|선물|섹터지수|+지수옵션|+위클리지수옵션|+미니지수옵션|+코스닥150옵션'
  .split('|').map(s => s[0] === '+' ? `<li class="plus">${s.slice(1)}` : s[0] === '-' ? `<li class="sub">${s.slice(1)}` : s[0] === '*' ? `<li class="sub sel"><span>${s.slice(1)}</span>` : `<li>${s}`).join('</li>') + '</li>';

const cols = w => '<colgroup>' + w.map(x => `<col style="width:${x}px">`).join('') + '</colgroup>';
const head = h => '<thead><tr>' + h.split(' ').map(x => `<th>${x}</th>`).join('') + '</tr></thead>';
const tri = u => `<i class="tri ${u ? 'up' : 'down'}"></i>`;

/* watch list */
const fav = [
  ['', '캐리소프트', 'g', '8,360', 1, '220', '2.70', '569,003', [60, 64, 57, 78]],
  ['', '리메드', 'g', '12,500', 0, '300', '2.34', '560,097', [57, 66, 52, 69]],
  ['', '신라젠', 'g', '14,000', 0, '350', '2.44', '611,048', [57, 60, 54, 62]],
  ['g1신', '월비스', '', '1,340', 1, '5', '0.37', '686,456', [62, 63, 58, 65]],
  ['g2증', '엔에스엔', 'g', '1,570', 1, '55', '3.63', '767,179', [61, 67, 61, 72]],
  ['g2증', '영인프런티', 'g', '4,320', 1, '30', '0.70', '797,643', [62, 64, 59, 68]],
  ['g1신', '파워로직스', 'g', '9,950', 1, '30', '0.30', '829,166', [62, 63, 60, 65]],
  ['g3신', '에이프로젠', '', '2,915', 0, '215', '6.87', '48,767,499', [47, 62, 44, 73]],
  ['g3신', '압타바이오', 'g', '26,850', 1, '2,550', '10.49', '4,775,539', [62, 80, 60, 88]]
];
let h = cols([32, 30, 115, 95, 104, 84, 127, 124]) + head('분 신 종목명 현재가 대비 등락률 거래량 L일봉H') + '<tbody>';
fav.forEach((r, i) => {
  const c = r[4] ? 'up' : 'down', k = r[8], f = r[4] ? '#d9431f' : '#2356c0', hot = i === 7 ? ' hot' : '';
  const y = 6, hh = i > 6 ? 17 : 16;
  h += `<tr><td>${r[0] ? `<mark class="${r[0].slice(0, 2)}">${r[0][2]}</mark>` : ''}</td><td></td><td class="t ${r[2] ? 'grn' : ''}">${r[1]}</td><td class="${c}${hot}">${r[3]}</td><td class="${c}${hot}">${tri(r[4])}${r[5]}</td><td class="${c}${hot}">${r[6]}</td><td class="${i > 6 || i === 3 ? 'hot' : ''}">${r[7]}</td><td><svg viewBox="0 0 124 28"><path d="M62.5 0v28" stroke="#e09a8c"/><path d="M${k[0]} ${y}h${k[1] - k[0]}v${hh}h-${k[1] - k[0]}zM${k[2]} 13h${k[3] - k[2]}v2h-${k[3] - k[2]}z" fill="${f}"/></svg></td></tr>`;
});
for (let i = 0; i < 7; i++) h += '<tr>' + '<td></td>'.repeat(8) + '</tr>';
$('fav').innerHTML = h + '</tbody>';

/* turnover ranking */
const rank = `1|2|삼성전자|51,800|1|300|+0.58|51,900|51,800|3,562,872|6,882,771|184,139
2|1|에이프로젠 KIC|2,900|0|230|-7.35|2,905|2,900|48,707,341|124,370,796|150,220
3|31|압타바이오|27,250|1|2,950|+12.14|27,300|27,250|4,738,341|2,531,979|127,483
4|4426|제이엘케이인스|9,510|1|1,010|+11.88|9,510|9,500|12,888,855|0|112,942
5|24|에이프로젠제약|1,450|1|10|+0.69|1,450|1,445|67,660,236|58,420,165|104,496
6|3|젬백스|31,100|0|2,100|-6.33|31,150|31,100|3,009,828|7,390,378|96,338
7|10|KODEX 레버리지|12,775|1|45|+0.35|12,780|12,775|6,577,393|10,713,113|83,726
8|49|네이처셀|8,400|0|2,450|-22.58|8,400|8,390|9,537,591|3,406,393|78,985
9|33|제일바이오|8,190|1|370|+4.73|8,190|8,180|9,306,861|6,851,781|77,973
10|223|디알텍|1,950|1|125|+6.85|1,950|1,945|35,852,212|3,719,017|70,663
11|11|KODEX 200선물인|6,955|0|30|-0.43|6,960|6,950|8,872,809|18,962,863|61,945
12|8|SK하이닉스|80,800|1|100|+0.12|80,900|80,800|762,855|1,831,960|61,459
13|7|에이치엘비|99,800|0|2,000|-1.96|99,800|99,700|605,518|1,484,439|60,978
14|12|KODEX 코스닥150|8,430|1|5|+0.06|8,435|8,430|7,190,416|15,763,231|60,600
15|18|KODEX 코스닥150|7,340|-|0|0|7,340|7,335|7,370,901|13,477,635|54,179`;
h = cols([54, 52, 170, 117, 112, 89, 107, 107, 129, 132, 123]) + head('순위 전일 종목명 현재가 전일대비 등락률 매도호가 매수호가 거래량 전일거래량 거래대금') + '<tbody>';
rank.split('\n').forEach((l, i) => {
  const r = l.split('|'), flat = r[4] === '-', c = flat ? '' : r[4] === '1' ? 'up' : 'down';
  const td = (v, k = '') => `<td class="${k}">${v}</td>`;
  h += `<tr class="${i === 7 ? 'cur' : Math.floor(i / 3) % 2 ? 'alt' : ''}">` + td(r[0]) + td(r[1]) + td(r[2], 't') + td(r[3], c) + td((flat ? '' : tri(r[4] === '1')) + r[5], c) + td(r[6], c) + td(r[7], c) + td(r[8], c || 'down') + td(r[9]) + td(r[10]) + td(r[11]) + '</tr>';
});
$('rank').innerHTML = h + '</tbody>';

/* order book */
$('asks').innerHTML = cols([178, 179, 182]) + [929, 116, 2899, 1093, 1831, 2675, 1761, 3376, 280, 520].map((q, i) =>
  `<tr><td></td><td style="background-size:${Math.round(q * .045)}px 84%">${q.toLocaleString('en')}</td><td class="up p">${(4570 - i * 5).toLocaleString('en')}</td></tr>`).join('');
$('trades').innerHTML = cols([152, 23, 154]) + [['4,520', 2, 0], ['4,520', 106, 0], ['4,520', 20, 0], ['4,520', 22, 1], ['4,520', 150, 1], ['4,520', 300, 1], ['4,510', 10, 0], ['4,510', 25, 0]].map(r =>
  `<tr><td class="up">${r[0]}</td><td class="rung"></td><td class="${r[2] ? 'up' : 'down'}">${r[1]}</td></tr>`).join('');
$('bids').innerHTML = cols([182, 179, 182]) + [50, 783, 1131, 3389, 4274, 1805, 3806, 3023].map((q, i) =>
  `<tr><td class="up p">${(4520 - i * 5).toLocaleString('en')}</td><td style="background-size:${Math.round(q * .0455)}px 84%">${q.toLocaleString('en')}</td><td class="down" style="background-size:${i === 4 ? 16 : 0}px 84%">${i ? '' : 2}</td></tr>`).join('');

/* drawing tools in the right dock */
const g = (d, c = '#234a9c', w = 3) => `<path d="${d}" fill="none" stroke="${c}" stroke-width="${w}"/>`;
const mount = g('M0 28l10-12 8 8 10-14 14 18', '#999', 2);
$('dock').innerHTML = [
  g('M2 8h24v12H14v12h30', '#234a9c', 6) + '<path d="M0 8l8-7v14z" fill="#234a9c"/>',
  g('M2 3h14v30H2zM2 18h14', '#777', 2) + g('M16 9h20M20 26h20') + '<path d="M40 9l-10-6v12zM14 26l10-6v12z" fill="#234a9c"/>',
  '<circle cx="20" cy="18" r="12" fill="#f0b845" stroke="#8a6a20" stroke-width="4" stroke-dasharray="6 3"/><circle cx="20" cy="18" r="5" fill="#fff" stroke="#8a6a20" stroke-width="2"/>',
  g('M0 14l12-9 10 8 12-8', '#e88', 2) + '<text x="10" y="30" font-size="22" fill="#234a9c">fx</text>',
  g('M4 2v28h36', '#888', 2) + g('M6 24l12-14 8 8 12-14', '#c33') + g('M24 24h14v10H24z'),
  mount + '<path d="M16 2v24l7-5 5 12 5-3-5-11h9z" fill="#234a9c"/>',
  mount + g('M0 9h44'), mount + g('M0 28L44 8', '#234a9c', 2),
  g('M0 18L40 2', '#999', 2) + '<text x="0" y="34" font-size="14" font-weight="700" fill="#234a9c">AUTO</text>',
  g('M0 24l8-4 10-14 8 14 14-12', '#c55', 2) + g('M2 28l8-6 8-14 8 14 10-8', '#234a9c', 2),
  g('M6 6v26M3 12h8v14H3z') + g('M20 2v30M15 8h11v20H15z', '#c33') + g('M33 6v26M30 12h8v12h-8z'),
  mount + g('M8 18V6h20v20', '#234a9c', 6), mount + '<text x="2" y="20" font-size="22" font-weight="700" font-family="Liberation Serif" fill="#234a9c">T</text>',
  mount + g('M8 6h20v22H8z'), g('M2 30L28 4M16 32L40 8', '#c33', 2), mount + '<text x="0" y="34" font-size="14" font-weight="700" fill="#234a9c">ALL</text>',
  g('M2 2h38v30H2zM2 10h38M2 18h38M12 2v30M22 2v30', '#999', 1) + '<text x="10" y="28" font-size="22" font-weight="700" font-family="Liberation Serif" fill="#234a9c">T</text>',
  g('M0 6h44', '#c33') + g('M0 18h44', '#444') + g('M0 30h44', '#36c') + mount
].map(s => `<button aria-label="차트 도구"><svg viewBox="0 0 44 36">${s}</svg></button>`).join('');

/* ---------- chart ---------- */
const months = [[8, '2017/06'], [120, '08'], [233, '09'], [341, '10'], [423, '11'], [535, '12'], [632, '2018/01'], [745, '02'], [838, '03'], [944, '04'], [1051, '05'], [1155, '06'], [1253, '07'], [1365, '08'], [1477, '09'], [1564, '10'], [1672, '11'], [1785, '12'], [1881, '2019/01'], [1994, '02'], [2082, '03'], [2184, '04'], [2297, '05'], [2405, '06'], [2500, '07'], [2620, '08'], [2726, '09'], [2824, '10'], [2932, '11'], [3040, '12']];
/* x, y of the closing line */
const key = '8,1569 46,1570 100,1568 119,1565 145,1552 180,1551 230,1556 260,1561 298,1558 329,1564 375,1559 417,1557 444,1545 467,1541 482,1524 494,1488 503,1506 520,1482 532,1463 545,1461 549,1392 560,1392 565,1465 570,1433 582,1420 586,1388 593,1412 605,1424 610,1449 624,1441 634,1408 647,1429 666,1420 681,1426 689,1404 698,1384 704,1330 715,1335 727,1335 738,1341 758,1351 765,1318 769,1273 781,1261 788,1290 800,1278 811,1294 834,1322 842,1290 853,1265 861,1245 868,1241 871,1151 875,1143 880,1133 885,1145 889,1066 891,1070 895,1228 901,1245 907,1347 911,1367 916,1392 926,1359 937,1371 949,1392 960,1382 980,1384 987,1306 997,1273 1006,1306 1014,1339 1022,1318 1033,1294 1047,1302 1056,1331 1071,1367 1081,1376 1087,1343 1102,1355 1129,1347 1134,1333 1148,1355 1179,1355 1185,1365 1187,1441 1191,1482 1196,1453 1205,1469 1216,1461 1237,1461 1251,1484 1268,1473 1293,1482 1310,1478 1315,1518 1324,1539 1339,1555 1367,1551 1377,1567 1409,1567 1437,1559 1475,1563 1488,1555 1493,1522 1500,1518 1507,1522 1512,1486 1524,1473 1531,1469 1535,1486 1556,1486 1584,1473 1602,1480 1607,1498 1626,1502 1644,1518 1661,1522 1672,1490 1696,1498 1714,1510 1749,1496 1777,1500 1794,1498 1809,1510 1844,1512 1868,1524 1879,1514 1907,1522 1938,1520 1945,1508 1970,1508 1977,1494 1998,1486 2068,1492 2089,1486 2152,1490 2180,1504 2207,1498 2243,1496 2271,1508 2307,1500 2328,1512 2378,1522 2452,1518 2457,1537 2484,1542 2520,1535 2562,1531 2598,1535 2612,1539 2626,1531 2640,1549 2690,1543 2715,1549 2720,1557 2747,1551 2790,1549 2825,1551 2843,1541 2893,1545 2900,1531 2918,1518 2939,1508 2953,1518 2981,1516 3010,1520 3038,1516 3073,1518 3077,1535'.split(' ').map(p => p.split(',').map(Number));
const N = 600, step = 5.124, X = i => 8 + i * step;
let seed = 7;
const rnd = () => (seed = (seed * 1103515245 + 12345) % 2147483648) / 2147483648;
const at = x => { let j = 1; while (j < key.length - 1 && key[j][0] < x) j++; const [a, b] = key[j - 1], [c, d] = key[j]; return b + (d - b) * Math.min(1, Math.max(0, (x - a) / (c - a))); };
const close = [], open = [], hi = [], lo = [];
for (let i = 0; i < N; i++) {
  const b = at(X(i)), amp = 3 + (1570 - b) * .055;
  close[i] = b + (rnd() - .5) * amp;
  open[i] = i ? close[i - 1] + (rnd() - .5) * amp * .9 : b;
  hi[i] = Math.min(open[i], close[i]) - rnd() * rnd() * amp * 2.2;
  lo[i] = Math.max(open[i], close[i]) + rnd() * rnd() * amp * 2;
}
open[172] = 1136; close[172] = 1066; hi[172] = 1046; lo[172] = 1145;
open[173] = 1228; close[173] = 1232; hi[173] = 1180; lo[173] = 1240;
hi[161] = 1270; hi[193] = 1235; hi[201] = 1246; hi[108] = 1350;
open[599] = 1528; hi[599] = 1524; lo[599] = 1543;
const spikes = '90:7 148:21 175:12 277:12 378:12 445:8 471:24 487:22b 527:19 547:27 564:36 582:31 609:22 649:16 699:22 720:19b 769:29 870:15 901:92 906:88b 914:61 919:47b 987:67 992:64b 1029:36 1085:25 1191:69 1212:24 1321:80 1326:57b 1336:36 1346:36 1376:66 1382:103 1388:66b 1423:27 1477:24 1490:93 1495:129 1500:134 1510:96 1515:81b 1526:81 1531:71b 1537:44 1560:32 1582:29 1607:24 1673:31 1748:15 1877:15 1941:42 1975:45 1996:31 2384:15 2457:15 2494:35 2687:7 2841:17 2898:50 2903:38b 2913:66 2937:17 3076:26'.split(' ');
const base = x => x < 70 ? 1 : x < 420 ? 4 : x < 520 ? 8 : x < 740 ? 14 : x < 890 ? 6 : x < 960 ? 18 : x < 1060 ? 14 : x < 1200 ? 8 : x < 1310 ? 6 : x < 1440 ? 20 : x < 1480 ? 9 : x < 1560 ? 26 : x < 1700 ? 15 : x < 1800 ? 8 : x < 1930 ? 5 : x < 2020 ? 8 : x < 2890 ? 4 : x < 2960 ? 9 : 5;
const vol = [], red = [];
for (let i = 0; i < N; i++) { vol[i] = base(X(i)) * (.5 + rnd() * .85); red[i] = close[i] <= open[i]; }
spikes.forEach(s => { const [x, v] = s.split(':'), i = Math.min(N - 1, Math.round((x - 8) / step)); vol[i] = parseInt(v); red[i] = !v.endsWith('b'); });

const ma = (arr, n, f = v => v) => {
  let p = '', s = 0;
  arr.forEach((v, i) => { s += v; if (i >= n) s -= arr[i - n]; if (i >= n - 1) p += (p ? 'L' : 'M') + X(i).toFixed(1) + ' ' + f(s / n).toFixed(1); });
  return p;
};
const line = (d, c, w = 1.5) => `<path d="${d}" fill="none" stroke="${c}" stroke-width="${w}"/>`;
const text = (x, y, s, c = '#444', extra = '') => `<text x="${x}" y="${y}" fill="${c}" ${extra}>${s}</text>`;
const R = '#d8401f', B = '#2a62c8';
let o = '<path d="M3136 992h114v830h-114zM7 1790h3243v32H7z" fill="#d2ddeb"/>';
let d = '';
for (let k = 0; k <= 13; k++) d += `M7 ${Math.round(1613.5 - k * 45.9)}H3136`;
d += 'M7 1659H3136M7 1724H3136';
months.slice(1).forEach(m => d += `M${m[0]} 992V1790`);
o += line(d, '#d4d4d4', 2);
d = '';
months.slice(1).forEach(m => d += `M${m[0]} 1790v32`);
for (let k = 0; k <= 60; k++) { const y = 1613.5 - k * 9.18; if (y > 1045) d += `M3136 ${y.toFixed(0)}h${k % 5 ? 4 : 10}`; }
for (let k = 0; k <= 11; k++) d += `M3136 ${1788 - k * 13}h${k % 5 ? 4 : 10}`;
o += line(d + 'M3136 992V1822', '#8a94a2', 1) + line('M7 1629H3250M7 1790H3250', '#777', 2);

const bodies = [['', ''], ['', '']];
for (let i = 0; i < N; i++) {
  const k = close[i] <= open[i] ? 0 : 1, x = X(i), t = Math.min(open[i], close[i]), b = Math.max(t + 2, Math.max(open[i], close[i]));
  bodies[k][0] += `M${(x - 2.3).toFixed(1)} ${t.toFixed(1)}h4.6V${b.toFixed(1)}h-4.6z`;
  bodies[k][1] += `M${x.toFixed(1)} ${hi[i].toFixed(1)}V${lo[i].toFixed(1)}`;
}
o += line(ma(close, 120), '#888') + line(ma(close, 60), '#3b8a5a');
[R, B].forEach((c, k) => o += `<g shape-rendering="crispEdges"><path d="${bodies[k][0]}" fill="${c}"/></g>` + line(bodies[k][1], c, 1.5));
o += line(ma(close, 20), '#dcae3e', 3.5) + line(ma(close, 10), '#243a94', 1.3) + line(ma(close, 5), '#b04aa8', 1.2);

const vb = ['', ''];
vol.forEach((v, i) => { vb[red[i] ? 0 : 1] += `M${(X(i) - 2.5).toFixed(1)} ${(1788 - v).toFixed(1)}h5V1788h-5z`; });
o += `<g shape-rendering="crispEdges"><path d="${vb[0]}" fill="${R}"/><path d="${vb[1]}" fill="#1f55bd"/></g>`;
const vy = v => 1787 - v;
o += line(ma(vol, 5, vy), '#b04aa8', 1.2) + line(ma(vol, 20, vy), '#dcae3e', 2) + line(ma(vol, 60, vy), '#3b8a5a', 2) + line(ma(vol, 120, vy), '#888', 2);

/* signals */
const arrow = (x, y, c) => `<path d="M${x} ${y - 10}l8 8h-4v12h-8v-12h-4z" fill="${c}"/>`;
[[896, 1257], [907, 1370], [563, 1490], [1186, 1467], [1315, 1545]].forEach(a => o += arrow(...a, '#0a20e0'));
[[547, 1465], [987, 1392], [1510, 1549], [2898, 1571]].forEach(a => o += arrow(...a, '#e03a1c'));
o += '<path d="M616 1415h16l-8 10zM2570 1491h2v26h7l-8 9-8-9h7zM2804 1508h2v25h7l-8 9-8-9h7zM864 1052h15v-7l10 8-10 8v-7h-15z" fill="#e03a1c"/><path d="M1357 1568h13v-7l11 8-11 8v-7h-13z" fill="#1414b4"/>';
o += text(669, 1058, '최고 61,680 (03/16)', '#cc432b') + text(1172, 1575, '최저 4,545 (08/06)', '#1a1aa8') + text(558, 1383, '배당락(0,00%)') + text(2498, 1483, '권리락(-4,52%)') + text(2727, 1501, '유상증자(0,00%)');

/* legends */
const sq = (x, y) => `<path d="M${x} ${y}h7v11h-7z" fill="#bbb" stroke="#777"/>`;
o += '<path d="M26 995h93v24H26z" fill="#eee" stroke="#aaa" stroke-width="2"/>' + sq(14, 1002) + sq(126, 1002) + sq(415, 1002) + sq(504, 1002) + sq(14, 1640)
  + text(33, 1014, '네이처셀', '#333') + text(146, 1014, '종가 단순 5', '#b04aa8') + text(269, 1014, '10', '#243a94') + text(303, 1014, '20', '#dcae3e') + text(338, 1014, '60', '#2f8a50') + text(374, 1014, '120', '#888') + text(433, 1014, '상한가', '#cc432b') + text(523, 1014, '하한가', '#1a2ab8')
  + text(34, 1652, '거래량', '#2f8a8a') + text(110, 1652, '단순 5', '#b04aa8') + text(184, 1652, '20', '#dcae3e') + text(219, 1652, '60', '#2f8a50') + text(256, 1652, '120', '#888') + text(15, 1676, '9,570,710주(280,96%)', '#333')
  + '<path d="M17 1028h23v22H17z" fill="#eee" stroke="#222" stroke-width="2"/><path d="M21 1033h15v13H21zM21 1037h15M26 1033v13M31 1033v13" fill="none" stroke="#666"/>';

/* axes */
for (let k = 0; k <= 12; k++) o += text(3150, Math.round(1619 - k * 45.9), k ? (k * 5000).toLocaleString('en') : '0', '#555');
o += text(3150, 1665, '50,000K', '#555') + text(3150, 1730, '25,000K', '#555') + text(3138, 1013, 'LC:83,06', '#cc432b') + text(3138, 1034, 'HC:-86,51', '#2c56b8')
  + '<path d="M3148 1548h100v20h-100z" fill="#d2ddeb"/><path d="M3144 1525h101v23h-101z" fill="#2360c4"/><path d="M3144 1744h101v22h-101z" fill="#d9401f"/>'
  + text(3151, 1544, '8,320', '#fff') + text(3150, 1565, '-23,32%', '#2c56b8') + text(3150, 1763, '9,571K', '#fff') + text(3150, 1784, '280,96%', '#cc432b')
  + '<path d="M3232 1636h13v12h-13z" fill="#444"/><path d="M3235 1639l7 6M3242 1639l-7 6" stroke="#fff"/>';
months.forEach(m => o += text(m[0] + 2, 1812, m[1], '#444'));
o += text(3152, 1812, '12/11', '#444');

/* pen marks */
['2935,1175 2903,1175 2893,1163 2875,1135 2857,1106 2857,1086 2875,1073 2921,1073 2946,1084 2960,1102 2964,1122 2964,1157 2942,1169', '2883,1087 2918,1088 2921,1110 2903,1118 2939,1118 2939,1135 2921,1153 2905,1156', '2962,1316 2965,1286 2962,1257 2950,1236 2918,1236 2886,1250 2874,1273 2875,1302 2888,1322 2903,1333 2959,1333', '2909,1254 2918,1251 2932,1255 2935,1278 2925,1294 2911,1307 2925,1307 2950,1303', '2971,1522 2989,1514 2992,1486 2985,1453 2974,1442 2950,1441 2942,1453 2928,1473 2919,1498 2925,1518 2942,1529 2957,1527 2981,1518', '2957,1471 2957,1520']
  .forEach(p => o += `<polyline points="${p}" fill="none" stroke="#e8468f" stroke-width="8" stroke-linecap="round" stroke-linejoin="round"/>`);
$('chart').innerHTML = o;
```
